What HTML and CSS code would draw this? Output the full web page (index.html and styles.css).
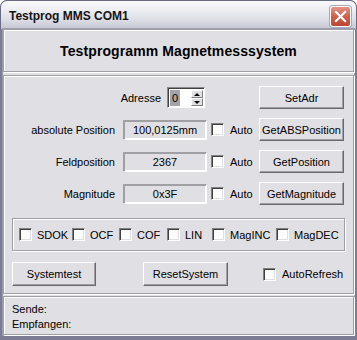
FILE: index.html
```html
<!DOCTYPE html>
<html>
<head>
  <meta charset="UTF-8">
  <title>Testprog MMS COM1</title>
  <link rel="stylesheet" href="styles.css">
</head>
<body>
  <div class="window">
    <div class="titlebar">
      <span class="title">Testprog MMS COM1</span>
      <span class="close">
        <svg width="21" height="21" viewBox="0 0 21 21">
          <path d="M6 6 L15 15 M15 6 L6 15" stroke="#fff" stroke-width="2.2" stroke-linecap="square"/>
        </svg>
      </span>
    </div>
    <div class="client">
      <div class="group head">
        <h1>Testprogramm Magnetmesssystem</h1>
      </div>

      <div class="group main">
        <div class="rows">
          <div class="addr">
            <span>Adresse</span>
            <div class="spin">
              <span class="spin-val"><span class="sel">0</span></span>
              <span class="spin-btns">
                <span class="spin-btn"><i class="up"></i></span>
                <span class="spin-btn"><i class="down"></i></span>
              </span>
            </div>
          </div>
          <button class="btn col4">SetAdr</button>

          <span class="lbl">absolute Position</span>
          <div class="field">100,0125mm</div>
          <label class="chk"><span class="box"></span>Auto</label>
          <button class="btn">GetABSPosition</button>

          <span class="lbl">Feldposition</span>
          <div class="field">2367</div>
          <label class="chk"><span class="box"></span>Auto</label>
          <button class="btn">GetPosition</button>

          <span class="lbl">Magnitude</span>
          <div class="field">0x3F</div>
          <label class="chk"><span class="box"></span>Auto</label>
          <button class="btn">GetMagnitude</button>
        </div>

        <div class="group flags">
          <label class="chk"><span class="box"></span>SDOK</label>
          <label class="chk"><span class="box"></span>OCF</label>
          <label class="chk"><span class="box"></span>COF</label>
          <label class="chk"><span class="box"></span>LIN</label>
          <label class="chk"><span class="box"></span>MagINC</label>
          <label class="chk"><span class="box"></span>MagDEC</label>
        </div>

        <div class="actions">
          <button class="btn wide">Systemtest</button>
          <button class="btn wide">ResetSystem</button>
          <label class="chk refresh"><span class="box"></span>AutoRefresh</label>
        </div>
      </div>

      <div class="group status">
        <div>Sende:</div>
        <div>Empfangen:</div>
      </div>
    </div>
  </div>
</body>
</html>
```

FILE: styles.css
```css
body {
  margin: 0;
  background: #ffffff;
  font-family: 'Liberation Sans', Arial, sans-serif;
  font-size: 11px;
  color: #000000;
}
.window {
  width: 357px;
  height: 340px;
  display: flex;
  flex-direction: column;
  background: #7c7c95;
  border-radius: 7px 7px 0 0;
  overflow: hidden;
}
.titlebar {
  height: 29px;
  flex: none;
  box-sizing: border-box;
  display: flex;
  align-items: center;
  justify-content: space-between;
  padding: 0 5px 0 8px;
  border: 1px solid #6a6a86;
  border-bottom: none;
  border-radius: 7px 7px 0 0;
  background: linear-gradient(#fbfbfd 0%, #eeeef3 30%, #dedee6 65%, #c6c6d3 100%);
}
.title {
  font-weight: bold;
  font-size: 12px;
  color: #141414;
  padding-top: 2px;
}
.close {
  width: 21px;
  height: 21px;
  box-sizing: border-box;
  border: 1px solid #ffffff;
  border-radius: 3px;
  background: linear-gradient(#e49585, #d0604c 50%, #bb4532);
  box-shadow: 0 0 0 1px #a8a8b8;
  display: flex;
  align-items: center;
  justify-content: center;
  margin-top: 2px;
}
.close svg {
  margin: -1px;
}
.client {
  flex: 1;
  margin: 0 3px 5px 3px;
  background: #e0dfe3;
  display: flex;
  flex-direction: column;
  box-shadow: 0 0 0 1px #9d9db2;
}
.group {
  border: 1px solid #a0a0a4;
  box-shadow: inset 1px 1px 0 #ffffff, 1px 1px 0 #ffffff;
}
.head {
  height: 41px;
  display: flex;
  align-items: center;
  justify-content: center;
}
.head h1 {
  margin: 0;
  font-size: 14px;
  font-weight: bold;
  letter-spacing: 0.1px;
}
.main {
  margin-top: 3px;
  padding: 10px 8px 7px 8px;
}
.rows {
  display: grid;
  grid-template-columns: 107px 84px 44px 85px;
  grid-auto-rows: 23px;
  column-gap: 4px;
  row-gap: 9px;
}
.lbl {
  align-self: center;
  text-align: right;
  padding-right: 4px;
}
.addr {
  grid-column: 1 / 3;
  display: flex;
  align-items: center;
  justify-content: flex-end;
  gap: 6px;
  padding-right: 2px;
}
.col4 {
  grid-column: 4;
}
.spin {
  width: 38px;
  height: 21px;
  box-sizing: border-box;
  display: flex;
  align-items: center;
  justify-content: space-between;
  background: #ffffff;
  border: 1px solid;
  border-color: #8a8a8e #ffffff #ffffff #8a8a8e;
  box-shadow: inset 1px 1px 0 #404040;
  padding: 2px 1px 1px 2px;
}
.spin-val {
  display: flex;
}
.sel {
  background: #a4a4a8;
  padding: 1px 2px;
  line-height: 14px;
}
.spin-btns {
  display: flex;
  flex-direction: column;
  width: 12px;
  height: 16px;
}
.spin-btn {
  flex: 1;
  display: flex;
  align-items: center;
  justify-content: center;
  background: #e0dfe3;
  border: 1px solid;
  border-color: #ffffff #808080 #808080 #ffffff;
}
.up {
  border-left: 3px solid transparent;
  border-right: 3px solid transparent;
  border-bottom: 3px solid #000000;
}
.down {
  border-left: 3px solid transparent;
  border-right: 3px solid transparent;
  border-top: 3px solid #000000;
}
.field {
  height: 20px;
  align-self: center;
  box-sizing: border-box;
  display: flex;
  align-items: center;
  justify-content: center;
  border: 1px solid;
  border-color: #a0a0a4 #ffffff #ffffff #a0a0a4;
  box-shadow: 1px 1px 0 #a0a0a4 inset, -1px -1px 0 #ffffff inset;
}
.chk {
  display: flex;
  align-items: center;
  gap: 6px;
  white-space: nowrap;
}
.box {
  width: 13px;
  height: 13px;
  box-sizing: border-box;
  flex: none;
  background: #fbfbfb;
  border: 1px solid;
  border-color: #808080 #ffffff #ffffff #808080;
  box-shadow: inset 1px 1px 0 #404040, inset -1px -1px 0 #e0dfe3;
}
.btn {
  font-family: inherit;
  font-size: 11px;
  color: #000000;
  padding: 0;
  background: #e0dfe3;
  border: 1px solid;
  border-color: #ffffff #6a6a6a #6a6a6a #ffffff;
  box-shadow: inset -1px -1px 0 #a0a0a4;
}
.flags {
  margin-top: 13px;
  height: 33px;
  box-sizing: border-box;
  display: grid;
  grid-template-columns: 53px 47px 48px 45px 64px auto;
  align-items: center;
  padding-left: 6px;
}
.flags .chk {
  gap: 5px;
}
.actions {
  margin-top: 11px;
  height: 24px;
  display: flex;
  align-items: stretch;
}
.wide {
  width: 84px;
}
.wide + .wide {
  margin-left: 47px;
  width: 85px;
}
.refresh {
  margin-left: 35px;
}
.status {
  margin-top: 2px;
  flex: 1;
  padding: 5px 8px 0 8px;
  line-height: 15px;
}
```
